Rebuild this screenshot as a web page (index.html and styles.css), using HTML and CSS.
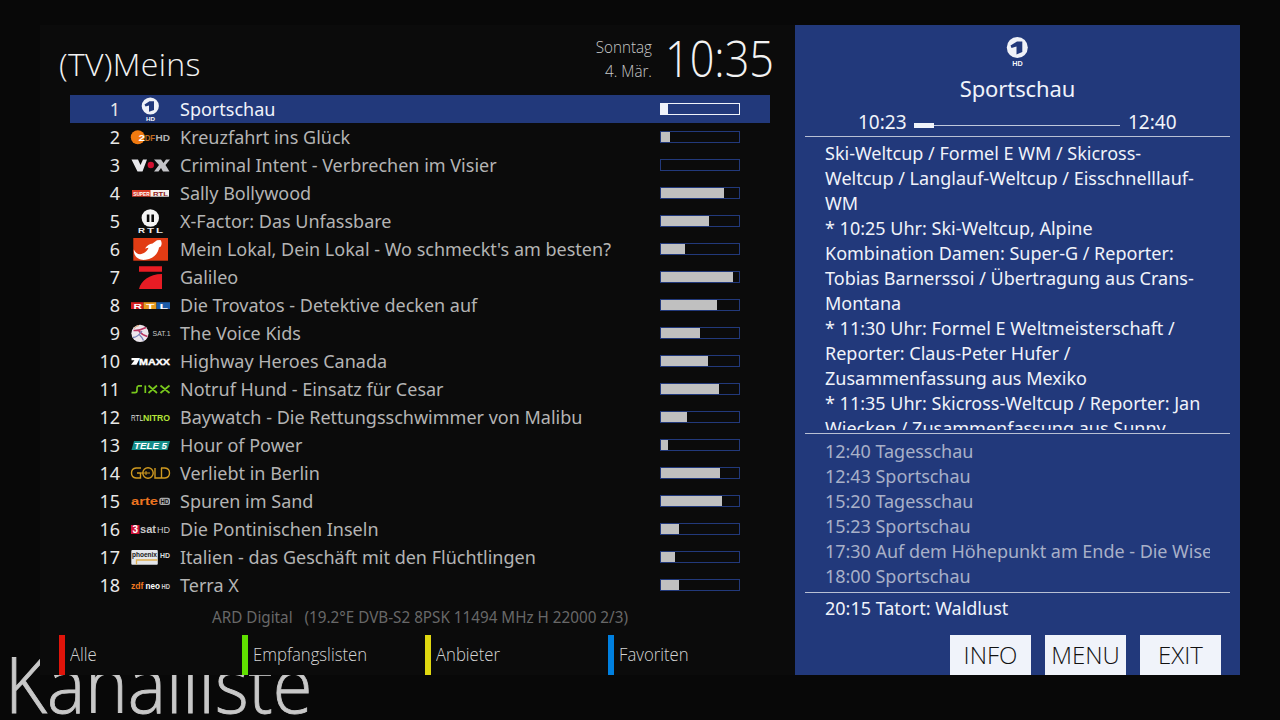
FILE: index.html
```html
<!DOCTYPE html>
<html lang="de">
<head>
<meta charset="utf-8">
<title>Kanalliste</title>
<link rel="stylesheet" href="styles.css">
</head>
<body>
<div class="screen">
  <div class="backdrop-title">Kanalliste</div>
  <main class="panel">
    <header class="top">
      <h1 class="title">(TV)Meins</h1>
      <div class="date"><span>Sonntag</span><span>4. Mär.</span></div>
      <div class="clock">10:35</div>
    </header>
    <ol class="channels">
      <li class="row selected"><span class="num">1</span>
        <svg class="logo" viewBox="0 0 40 28"><circle cx="20.3" cy="11" r="8.6" fill="#f0f2f8"/><path d="M14.5 9.5L19.5 6.2H24V15L19 16.8V10.5L15.500 11.5Z" fill="#22397b"/><text x="16" y="25.8" font-size="6" textLength="9" lengthAdjust="spacingAndGlyphs" class="b" fill="#fff">HD</text></svg>
        <span class="name">Sportschau</span><span class="bar"><i style="width:7px"></i></span></li>
      <li class="row"><span class="num">2</span>
        <svg class="logo" viewBox="0 0 40 28"><circle cx="7.8" cy="14.3" r="7" fill="#f07a10"/><text x="8.5" y="17.6" font-size="9.5" textLength="6.500" lengthAdjust="spacingAndGlyphs" class="b" fill="#fff">2</text><text x="14.7" y="17.6" font-size="9.5" textLength="10.500" lengthAdjust="spacingAndGlyphs" class="b" fill="#c06a1c">DF</text><text x="25.5" y="17.6" font-size="9.5" textLength="14.500" lengthAdjust="spacingAndGlyphs" class="b" fill="#b4b4b4">HD</text></svg>
        <span class="name">Kreuzfahrt ins Glück</span><span class="bar"><i style="width:9px"></i></span></li>
      <li class="row"><span class="num">3</span>
        <svg class="logo" viewBox="0 0 40 28"><path d="M1.500 8.500H8L10.500 14 13 8.500H17L12.500 20.500H7.500Z" fill="#e8e8ec"/><circle cx="20.8" cy="14" r="3.200" fill="#d01030"/><path d="M24 8.500H31L33.500 12 36 8.500H40L35.500 14 39.500 20.500H33L31 17 28.500 20.500H24L29 14Z" fill="#c4c4c8"/></svg>
        <span class="name">Criminal Intent - Verbrechen im Visier</span><span class="bar"></span></li>
      <li class="row"><span class="num">4</span>
        <svg class="logo" viewBox="0 0 40 28"><rect x="2" y="11" width="19" height="6.700" fill="#d83c28"/><rect x="20.500" y="11" width="18.500" height="6.700" fill="#f4f0ee"/><text x="3.200" y="16.500" font-size="5.500" textLength="16.500" lengthAdjust="spacingAndGlyphs" class="b" fill="#fff">SUPER</text><text x="23" y="16.600" font-size="6" textLength="15" lengthAdjust="spacingAndGlyphs" class="b" fill="#8c1818">RTL</text></svg>
        <span class="name">Sally Bollywood</span><span class="bar"><i style="width:63px"></i></span></li>
      <li class="row"><span class="num">5</span>
        <svg class="logo" viewBox="0 0 40 28"><circle cx="20.300" cy="11" r="8.700" fill="#f4f4f4"/><path d="M16.800 7.500h2.600v7.500h-2.600zM21.400 7.500H24v7.500h-2.600z" fill="#080808"/><g font-size="6.500" class="b" fill="#eee"><text x="8" y="26" textLength="7" lengthAdjust="spacingAndGlyphs">R</text><text x="17" y="26" textLength="7" lengthAdjust="spacingAndGlyphs">T</text><text x="26" y="26" textLength="7" lengthAdjust="spacingAndGlyphs">L</text></g></svg>
        <span class="name">X-Factor: Das Unfassbare</span><span class="bar"><i style="width:48px"></i></span></li>
      <li class="row"><span class="num">6</span>
        <svg class="logo" viewBox="0 0 40 28"><rect x="3.300" y="3" width="34.700" height="22.700" fill="#e23c14"/><path d="M3.800 14.500C3.500 21.500 8.500 25.500 15.500 24.800C24.500 24 28.500 17 29 12.500L30.800 11.500C32.300 9 31.500 6.500 30.500 5L27 5.200L22.500 8.500C19.500 9 17 10.500 15 13.500L18.500 12.800C16.500 19 7 22.500 3.800 14.500Z" fill="#fff"/></svg>
        <span class="name">Mein Lokal, Dein Lokal - Wo schmeckt's am besten?</span><span class="bar"><i style="width:24px"></i></span></li>
      <li class="row"><span class="num">7</span>
        <svg class="logo" viewBox="0 0 40 28"><path d="M9 3.200H32V8.800H9ZM32 11V26H9C11 18 19 11 32 11Z" fill="#e81c24"/></svg>
        <span class="name">Galileo</span><span class="bar"><i style="width:72px"></i></span></li>
      <li class="row"><span class="num">8</span>
        <svg class="logo" viewBox="0 0 40 28"><path d="M1 11.200h12.500v6.800H1z" fill="#d82020"/><path d="M13.500 11.200h13v6.800h-13z" fill="#e89c20"/><path d="M26.500 11.200H40v6.800H26.500z" fill="#1c5ca8"/><g font-size="8" class="b" fill="#fff"><text x="3.500" y="17.500" textLength="8.500" lengthAdjust="spacingAndGlyphs">R</text><text x="16" y="17.500" textLength="8.500" lengthAdjust="spacingAndGlyphs">T</text><text x="29.500" y="17.500" textLength="8.500" lengthAdjust="spacingAndGlyphs">L</text></g></svg>
        <span class="name">Die Trovatos - Detektive decken auf</span><span class="bar"><i style="width:56px"></i></span></li>
      <li class="row"><span class="num">9</span>
        <svg class="logo" viewBox="0 0 40 28"><circle cx="10" cy="14.300" r="8.600" fill="#ece6ec"/><path d="M3.500 11.500Q9 12 16 8.500M9 12Q12 16 17.500 17.500" stroke="#b83460" stroke-width="1.600" fill="none"/><path d="M3 18.500Q8 18 12 12M9.500 16Q12 18 13.500 21.500" stroke="#7480b8" stroke-width="1.300" fill="none"/><path d="M4 9.500Q6 7 9 6.500" stroke="#e0a070" fill="none"/><text x="22.500" y="17.300" font-size="7.500" textLength="18" lengthAdjust="spacingAndGlyphs" fill="#c8c8c8">SAT.1</text></svg>
        <span class="name">The Voice Kids</span><span class="bar"><i style="width:39px"></i></span></li>
      <li class="row"><span class="num">10</span>
        <svg class="logo" viewBox="0 0 40 28"><path d="M1.500 11H10L6.500 17.800H1L4.500 13.200H1.500Z" fill="#fff"/><text x="9" y="17.700" font-size="9.300" textLength="31" lengthAdjust="spacingAndGlyphs" class="b heavy" fill="#fff">MAXX</text></svg>
        <span class="name">Highway Heroes Canada</span><span class="bar"><i style="width:47px"></i></span></li>
      <li class="row"><span class="num">11</span>
        <svg class="logo" viewBox="0 0 40 28"><path d="M12 10.800H8.500Q7 11 7 13V15.500Q7 17.700 5 17.700H1.500M15.300 10.500V18M18.500 10.500L27 18M27 10.500L18.500 18M30.500 10.500L39.500 18M39.500 10.500L30.500 18" stroke="#78c81c" stroke-width="1.700" fill="none"/></svg>
        <span class="name">Notruf Hund - Einsatz für Cesar</span><span class="bar"><i style="width:58px"></i></span></li>
      <li class="row"><span class="num">12</span>
        <svg class="logo" viewBox="0 0 40 28"><text x="1" y="17.600" font-size="9.500" textLength="12" lengthAdjust="spacingAndGlyphs" fill="#ddd">RTL</text><text x="13" y="17.600" font-size="9.500" textLength="27" lengthAdjust="spacingAndGlyphs" class="b" fill="#b4e438">NITRO</text></svg>
        <span class="name">Baywatch - Die Rettungsschwimmer von Malibu</span><span class="bar"><i style="width:26px"></i></span></li>
      <li class="row"><span class="num">13</span>
        <svg class="logo" viewBox="0 0 40 28"><path d="M4 10H40L37.500 19H1.500Z" fill="#148c88"/><text x="4" y="17.500" font-size="9" textLength="33" lengthAdjust="spacingAndGlyphs" class="b it" fill="#fff">TELE 5</text></svg>
        <span class="name">Hour of Power</span><span class="bar"><i style="width:7px"></i></span></li>
      <li class="row"><span class="num">14</span>
        <svg class="logo" viewBox="0 0 40 28"><path d="M11 9H6Q1.500 9.500 1.500 14T6 19H10.500V14H7M25 9V19H31M31 9H35Q39.500 9.500 39.500 14T35 19H31.500V9" stroke="#d09a20" stroke-width="1.400" fill="none"/><circle cx="18" cy="14" r="5.200" stroke="#d09a20" stroke-width="1.400" fill="none"/><path d="M11 14H20M16 12v4" stroke="#d09a20"/></svg>
        <span class="name">Verliebt in Berlin</span><span class="bar"><i style="width:59px"></i></span></li>
      <li class="row"><span class="num">15</span>
        <svg class="logo" viewBox="0 0 40 28"><text x="1" y="17.700" font-size="10.500" textLength="27" lengthAdjust="spacingAndGlyphs" class="b" fill="#ec7420">arte</text><rect x="29.300" y="10.700" width="10.700" height="7.300" rx="2" fill="#aaa"/><text x="30.500" y="16.800" font-size="7" textLength="8.500" lengthAdjust="spacingAndGlyphs" class="b" fill="#111">HD</text></svg>
        <span class="name">Spuren im Sand</span><span class="bar"><i style="width:61px"></i></span></li>
      <li class="row"><span class="num">16</span>
        <svg class="logo" viewBox="0 0 40 28"><rect x="1" y="10" width="8.500" height="9" fill="#d01438"/><text x="2.500" y="18" font-size="10" class="b" fill="#fff">3</text><text x="10" y="17.700" font-size="10.500" textLength="16" lengthAdjust="spacingAndGlyphs" class="b" fill="#c8c8c8">sat</text><text x="27" y="17.700" font-size="8.500" textLength="13" lengthAdjust="spacingAndGlyphs" fill="#ccc">HD</text></svg>
        <span class="name">Die Pontinischen Inseln</span><span class="bar"><i style="width:18px"></i></span></li>
      <li class="row"><span class="num">17</span>
        <svg class="logo" viewBox="0 0 40 28"><rect x="1.300" y="7" width="26.500" height="14.700" rx="1" fill="#e4e6ea"/><text x="2" y="14.300" font-size="8" textLength="25" lengthAdjust="spacingAndGlyphs" class="b" fill="#181818">phoenix</text><path d="M6.500 21.500V17H27.500" stroke="#e0b050" stroke-width="1.300" fill="none"/><text x="30" y="14.500" font-size="6.500" textLength="10" lengthAdjust="spacingAndGlyphs" class="b" fill="#ddd">HD</text></svg>
        <span class="name">Italien - das Geschäft mit den Flüchtlingen</span><span class="bar"><i style="width:14px"></i></span></li>
      <li class="row"><span class="num">18</span>
        <svg class="logo" viewBox="0 0 40 28"><text x="1" y="17.500" font-size="9" textLength="12.500" lengthAdjust="spacingAndGlyphs" class="b" fill="#f07820">zdf</text><text x="15.500" y="17.500" font-size="9.500" textLength="14.500" lengthAdjust="spacingAndGlyphs" class="b" fill="#fff">neo</text><text x="31.500" y="17.500" font-size="6.500" textLength="8.500" lengthAdjust="spacingAndGlyphs" class="b" fill="#ccc">HD</text></svg>
        <span class="name">Terra X</span><span class="bar"><i style="width:18px"></i></span></li>
    </ol>
    <div class="tuner">ARD Digital &nbsp; (19.2°E DVB-S2 8PSK 11494 MHz H 22000 2/3)</div>
    <nav class="keys">
      <span class="key red"><span>Alle</span></span><span class="key green"><span>Empfangslisten</span></span><span class="key yellow"><span>Anbieter</span></span><span class="key blue"><span>Favoriten</span></span>
    </nav>
  </main>
  <aside class="info">
    <svg class="biglogo" viewBox="0 0 30 32"><circle cx="15.300" cy="11.500" r="10.500" fill="#f0f2f8"/><path d="M8.500 9.500L15 5.500H20.300V16L14.500 18.500V10.500L9.500 12Z" fill="#22397b"/><text x="10.300" y="30" font-size="7.500" textLength="10.500" lengthAdjust="spacingAndGlyphs" class="b" fill="#f0f2f8">HD</text></svg>
    <h2 class="event">Sportschau</h2>
    <div class="times"><span class="start">10:23</span><span class="track"><i></i></span><span>12:40</span></div>
    <p class="desc">Ski-Weltcup / Formel E WM / Skicross-<br>Weltcup / Langlauf-Weltcup / Eisschnelllauf-<br>WM<br>* 10:25 Uhr: Ski-Weltcup, Alpine<br>Kombination Damen: Super-G / Reporter:<br>Tobias Barnerssoi / Übertragung aus Crans-<br>Montana<br>* 11:30 Uhr: Formel E Weltmeisterschaft /<br>Reporter: Claus-Peter Hufer /<br>Zusammenfassung aus Mexiko<br>* 11:35 Uhr: Skicross-Weltcup / Reporter: Jan<br>Wiecken / Zusammenfassung aus Sunny</p>
    <ul class="next"><li>12:40 Tagesschau</li><li>12:43 Sportschau</li><li>15:20 Tagesschau</li><li>15:23 Sportschau</li><li>17:30 Auf dem Höhepunkt am Ende - Die Wise</li><li>18:00 Sportschau</li></ul>
    <div class="prime">20:15 Tatort: Waldlust</div>
    <div class="buttons"><span class="btn">INFO</span><span class="btn">MENU</span><span class="btn">EXIT</span></div>
  </aside>
</div>
</body>
</html>
```
FILE: styles.css
```css
* { box-sizing: border-box; margin: 0; padding: 0; }
body { background: #080808; font-family: "Noto Sans", "Open Sans", sans-serif; font-size: 18px; color: #b4b4b4; }
.screen { position: relative; width: 1280px; height: 720px; overflow: hidden; padding: 25px 40px 45px; display: grid; grid-template-columns: 755px 445px; }
.backdrop-title { position: absolute; left: 5px; top: 630px; font: 300 78px/106px "Open Sans", sans-serif; color: #c8c8c8; white-space: nowrap; transform: scaleX(.925); transform-origin: 0 0; -webkit-text-stroke: .9px #c8c8c8; }
.panel { position: relative; background: #0b0b0b; height: 650px; }
.top { height: 70px; display: flex; font-family: "Open Sans", sans-serif; font-weight: 300; color: #f2f2f2; white-space: nowrap; }
.title { width: 500px; padding-left: 19px; font-size: 32px; font-weight: 300; line-height: 78px; letter-spacing: .3px; }
.date { width: 112px; padding-top: 10px; display: flex; flex-direction: column; text-align: right; font-size: 16px; line-height: 24px; color: #c8c8c8; transform: scaleX(.95); transform-origin: 100% 0; }
.clock { margin-left: 13px; width: 120px; font-size: 50px; line-height: 66px; transform: scaleX(.865); transform-origin: 0 0; }
.channels { list-style: none; }
.row { display: grid; grid-template-columns: 50px 40px 470px 80px; column-gap: 10px; align-items: center; width: 700px; height: 28px; margin-left: 30px; line-height: 28px; white-space: nowrap; }
.row.selected { background: #22397b; color: #f0f3fa; }
.num { text-align: right; color: #e8e8e8; }
.logo { width: 40px; height: 28px; font-family: "Liberation Sans", sans-serif; overflow: visible; }
.b { font-weight: 700; font-family: "Liberation Sans", sans-serif; }
.heavy { stroke: #fff; stroke-width: .4; }
.it { font-style: italic; }
.bar { width: 80px; height: 12px; border: 1px solid #22397b; display: flex; }
.bar i { background: #c0c0c0; height: 10px; }
.selected .bar { border-color: #f0f3fa; }
.selected .bar i { background: #f0f3fa; }
.tuner { height: 36px; line-height: 37px; font-size: 16px; color: #686868; text-align: center; width: 760px; white-space: nowrap; transform: scaleX(.952); }
.keys { display: grid; grid-template-columns: repeat(4, 183px); margin-left: 19px; }
.key { height: 40px; line-height: 39px; padding-left: 5px; border-left: 6px solid; font-family: "Open Sans", sans-serif; font-weight: 300; font-size: 18px; }
.key span { display: inline-block; color: #d4d4d4; transform: scaleX(.928); transform-origin: 0 0; }
.red { border-color: #e0140a; }
.green { border-color: #60e000; }
.yellow { border-color: #e0d810; }
.blue { border-color: #0080e0; }
.info { background: #22397b; color: #f0f3fa; height: 650px; padding: 0 10px; white-space: nowrap; display: flex; flex-direction: column; }
.biglogo { width: 30px; height: 32px; margin: 11px 198px 0 197px; font-family: "Liberation Sans", sans-serif; flex: none; }
.event { font-size: 22px; font-weight: 400; line-height: 40px; text-align: center; height: 42px; letter-spacing: -.1px; }
.times { height: 26px; line-height: 25px; display: flex; padding-left: 53px; font-size: 19px; }
.start { width: 56px; }
.track { width: 206px; margin-right: 8px; height: 1px; margin-top: 15px; background: #c0c8dc; display: flex; align-items: center; }
.track i { width: 20px; height: 5px; background: #f0f3fa; flex: none; }
.desc { border-top: 1px solid #b8c0d4; padding: 4px 20px 0; line-height: 25px; overflow: hidden; height: 294px; margin-bottom: 3px; }
.next { list-style: none; border-top: 1px solid #b8c0d4; padding: 5px 20px 0; line-height: 25px; height: 159px; color: #a8b0c8; }
.next li { overflow: hidden; width: 385px; letter-spacing: -.03px; }
.prime { border-top: 1px solid #b8c0d4; padding-left: 20px; height: 43px; line-height: 31px; }
.buttons { display: flex; gap: 14px; margin-left: 145px; }
.btn { width: 81px; height: 40px; background: #f0f3fa; color: #111; text-align: center; line-height: 40px; font-family: "Open Sans", sans-serif; font-weight: 300; font-size: 24px; }
```
